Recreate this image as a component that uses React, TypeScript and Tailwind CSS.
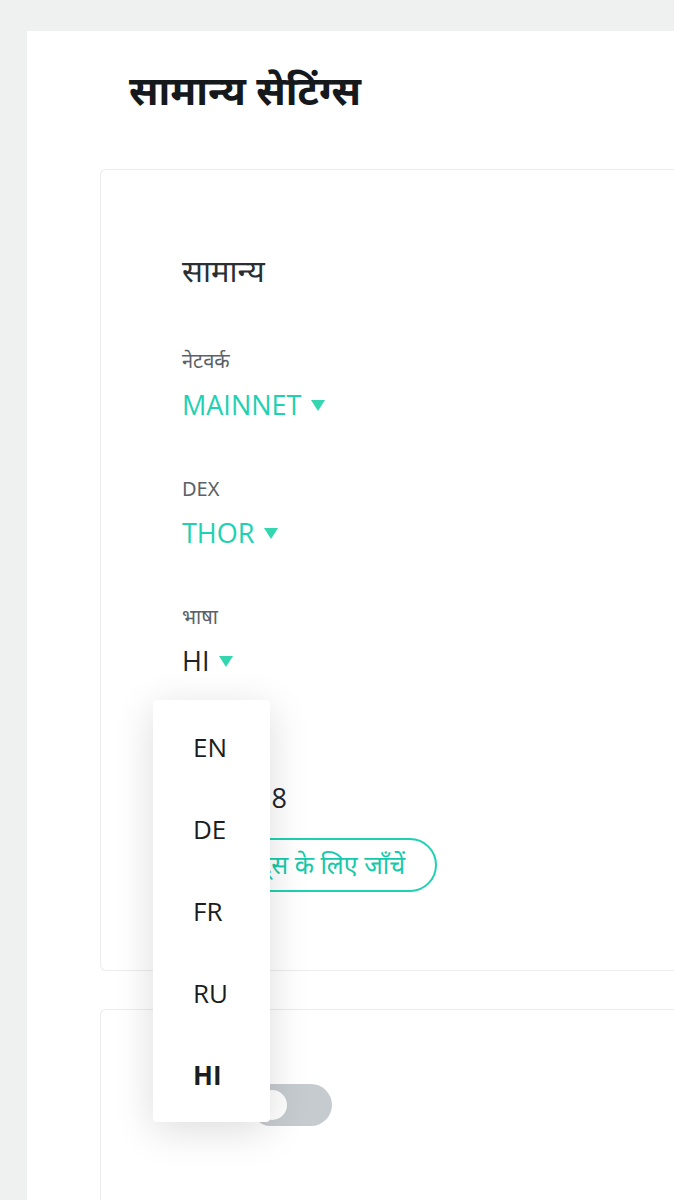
const latin = { fontFamily: '"Open Sans", "Noto Sans", sans-serif' };

function Caret() {
  return (
    <svg width="16" height="13" viewBox="0 0 16 13" className="ml-[9px] inline-block">
      <path d="M1 1h14L8 12z" fill="#33d6ae" />
    </svg>
  );
}

function Field({ label, value, teal }: { label: string; value: string; teal?: boolean }) {
  return (
    <div className="flex flex-col">
      <span className="text-[20px] leading-6 text-[#5b6168]">{label}</span>
      <span
        className={`mt-[16px] flex items-center text-[27px] leading-8 ${teal ? "text-[#1ed1b1]" : "text-[#1f2326]"}`}
        style={latin}
      >
        {value}
        <Caret />
      </span>
    </div>
  );
}

export default function App() {
  const langs = ["EN", "DE", "FR", "RU", "HI"];
  return (
    <div
      className="relative min-h-[1200px] overflow-hidden bg-[#eff1f1] pt-[31px] pl-[27px]"
      style={{ fontFamily: '"Noto Sans", "Open Sans", sans-serif' }}
    >
      <div className="min-h-[1169px] bg-white pb-10">
        <h1 className="pt-[33px] pl-[102px] text-[40px] font-bold leading-[52px] text-[#15191c]">
          सामान्य सेटिंग्स
        </h1>

        <div className="ml-[73px] mt-[53px] h-[802px] rounded-l-md border border-r-0 border-[#ececec] pl-[81px] pt-[80px]">
          <h2 className="text-[31px] leading-10 text-[#2a2f34]">सामान्य</h2>
          <div className="mt-[59px] flex flex-col gap-[56px]">
            <Field label="नेटवर्क" value="MAINNET" teal />
            <Field label="DEX" value="THOR" teal />
            <Field label="भाषा" value="HI" />
            <div className="mt-[9px] flex flex-col">
              <span className="text-[20px] leading-6 text-[#5b6168]">संस्करण</span>
              <span className="mt-[16px] text-[27px] leading-8 text-[#1f2326]" style={latin}>
                v0.10.18
              </span>
              <button className="mt-[24px] h-[54px] w-fit rounded-full border-2 border-[#1ed1b1] pl-[28px] pr-[30px] text-[25px] text-[#15c9a9]">
                अपडेट्स के लिए जाँचें
              </button>
            </div>
          </div>
        </div>

        <div className="ml-[73px] mt-[38px] h-[200px] rounded-l-md border border-r-0 border-[#ececec] pl-[81px] pt-[74px]">
          <div className="flex items-center gap-[20px]">
            <span className="w-[48px] text-[20px] text-[#5b6168]">उन्नत</span>
            <div className="flex h-[42px] w-[82px] items-center rounded-full bg-[#c6cbd0] px-[7px]">
              <div className="h-[30px] w-[30px] rounded-full bg-white" />
            </div>
          </div>
        </div>
      </div>

      <div className="absolute left-[153px] top-[700px] w-[117px] rounded-sm bg-white py-[6px] shadow-[0_8px_40px_rgba(0,0,0,0.14)]">
        {langs.map((l) => (
          <div
            key={l}
            className={`flex h-[82px] items-center pl-[40px] text-[26px] text-[#1a1e21] ${l === "HI" ? "font-bold" : ""}`}
            style={latin}
          >
            {l}
          </div>
        ))}
      </div>
    </div>
  );
}
